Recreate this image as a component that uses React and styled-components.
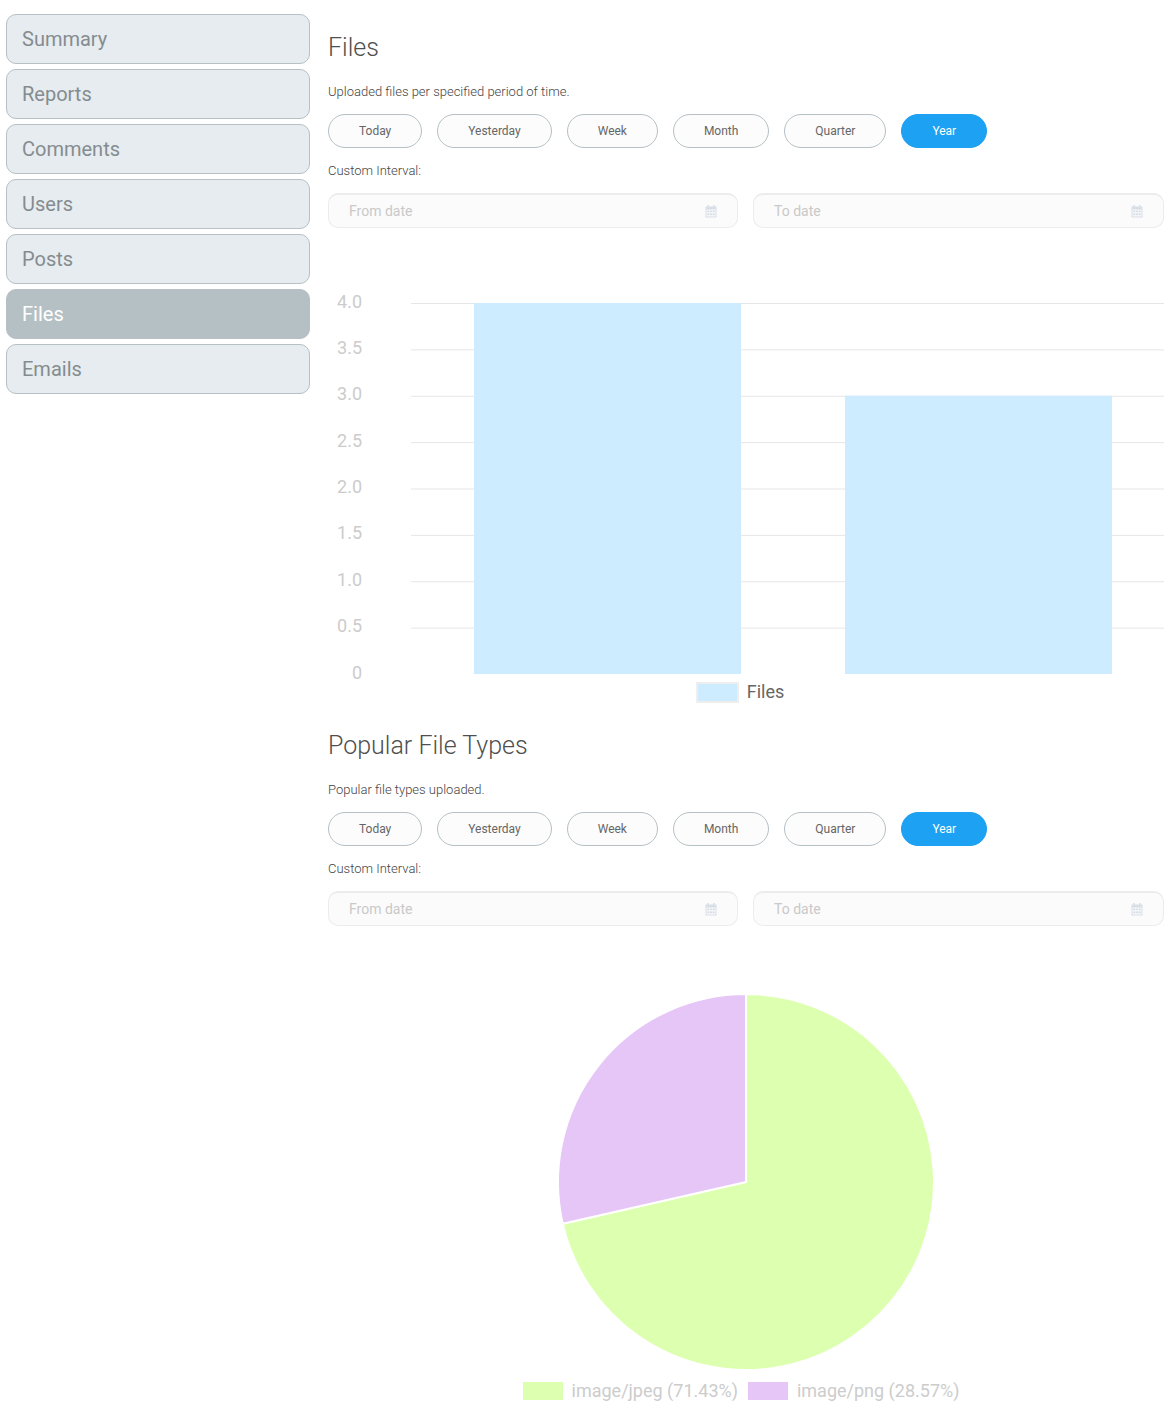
import React from "react";
import styled, { createGlobalStyle } from "styled-components";

const NAV_ITEMS = ["Summary", "Reports", "Comments", "Users", "Posts", "Files", "Emails"];
const PERIODS = ["Today", "Yesterday", "Week", "Month", "Quarter", "Year"];
const TICKS = ["4.0", "3.5", "3.0", "2.5", "2.0", "1.5", "1.0", "0.5", "0"];
const BARS = [
  { x: 146, value: 4 },
  { x: 517, value: 3 },
];
const PIE = [
  { label: "image/jpeg", share: 71.43, color: "#ddffb0" },
  { label: "image/png", share: 28.57, color: "#e5c6f7" },
];

const CalendarIcon = () => (
  <svg width="12" height="14" viewBox="0 0 12 14" aria-hidden="true">
    <path d="M0.5 2.5h11V13.5H0.5z" fill="#d9dfe7" />
    <path d="M2.4 1h1.4v3H2.4zM8.2 1h1.4v3H8.2z" fill="#d9dfe7" />
    <path d="M1.5 5.5h9V12.5H1.5z" fill="#f4f6f8" />
    <path
      d="M2.6 6.8h1.5v1.3H2.6zM5.25 6.8h1.5v1.3H5.25zM7.9 6.8h1.5v1.3H7.9zM2.6 9.6h1.5v1.3H2.6zM5.25 9.6h1.5v1.3H5.25zM7.9 9.6h1.5v1.3H7.9z"
      fill="#ced5de"
    />
  </svg>
);

const BarChart = () => {
  const top = 23;
  const step = 46.375;
  const bottom = top + step * 8;
  return (
    <ChartSvg width="836" height="403" viewBox="0 0 836 403">
      {TICKS.map((tick, i) => (
        <g key={tick}>
          {i < 8 && (
            <line
              x1="83"
              x2="836"
              y1={top + 0.5 + step * i}
              y2={top + 0.5 + step * i}
              stroke="#e6e6e6"
              strokeWidth="1"
            />
          )}
          <TickLabel x="34" y={top + 5 + Math.floor(step * i)}>
            {tick}
          </TickLabel>
        </g>
      ))}
      {BARS.map((bar) => {
        const height = bar.value * 2 * step;
        return (
          <rect key={bar.x} x={bar.x} y={bottom - height} width="267" height={height} fill="#cdecff" />
        );
      })}
    </ChartSvg>
  );
};

const PieChart = () => {
  const cx = 418;
  const cy = 190;
  const r = 188;
  let angle = 0;
  const slices = PIE.map((slice) => {
    const start = angle;
    angle += (slice.share / 100) * Math.PI * 2;
    const large = angle - start > Math.PI ? 1 : 0;
    const x1 = cx + r * Math.sin(start);
    const y1 = cy - r * Math.cos(start);
    const x2 = cx + r * Math.sin(angle);
    const y2 = cy - r * Math.cos(angle);
    return { ...slice, d: `M${cx} ${cy}L${x1} ${y1}A${r} ${r} 0 ${large} 1 ${x2} ${y2}Z` };
  });
  return (
    <ChartSvg width="836" height="380" viewBox="0 0 836 380">
      {slices.map((slice) => (
        <path key={slice.label} d={slice.d} fill={slice.color} stroke="#fff" strokeWidth="2" />
      ))}
    </ChartSvg>
  );
};

const Filters = () => (
  <>
    <PeriodRow>
      {PERIODS.map((period) => (
        <PeriodButton key={period} $active={period === "Year"}>
          {period}
        </PeriodButton>
      ))}
    </PeriodRow>
    <IntervalLabel>Custom Interval:</IntervalLabel>
    <DateRow>
      <DateField>
        <span>From date</span>
        <CalendarIcon />
      </DateField>
      <DateField>
        <span>To date</span>
        <CalendarIcon />
      </DateField>
    </DateRow>
  </>
);

const App = () => {
  return (
    <Page>
      <GlobalStyle />
      <Sidebar>
        {NAV_ITEMS.map((item) => (
          <NavItem key={item} $active={item === "Files"}>
            {item}
          </NavItem>
        ))}
      </Sidebar>
      <Main>
        <Section>
          <Title>Files</Title>
          <Subtitle>Uploaded files per specified period of time.</Subtitle>
          <Filters />
          <BarArea>
            <BarChart />
            <BarLegend>
              <BarSwatch />
              <span>Files</span>
            </BarLegend>
          </BarArea>
        </Section>
        <Section>
          <Title>Popular File Types</Title>
          <Subtitle>Popular file types uploaded.</Subtitle>
          <Filters />
          <PieArea>
            <PieChart />
            <PieLegend>
              {PIE.map((slice) => (
                <PieLegendItem key={slice.label}>
                  <PieSwatch $color={slice.color} />
                  <span>
                    {slice.label} ({slice.share}%)
                  </span>
                </PieLegendItem>
              ))}
            </PieLegend>
          </PieArea>
        </Section>
      </Main>
    </Page>
  );
};

export default App;

const GlobalStyle = createGlobalStyle`
  body {
    margin: 0;
    background: #fff;
    font-family: Roboto, "Liberation Sans", sans-serif;
  }
`;

const Page = styled.div`
  display: flex;
  align-items: flex-start;
  gap: 18px;
  padding: 14px 9px 0 6px;
  height: 1414px;
  overflow: hidden;
`;

const Sidebar = styled.nav`
  display: flex;
  flex-direction: column;
  gap: 5px;
  flex: 0 0 304px;
`;

const NavItem = styled.div`
  box-sizing: border-box;
  height: 50px;
  display: flex;
  align-items: center;
  padding-left: 15px;
  border: 1px solid #b6c0c5;
  border-radius: 10px;
  font-size: 20px;
  color: ${(p) => (p.$active ? "#fff" : "#858c90")};
  background: ${(p) => (p.$active ? "#b5c0c4" : "#e6ecef")};
`;

const Main = styled.main`
  flex: 1;
  min-width: 0;
  display: flex;
  flex-direction: column;
`;

const Section = styled.section`
  display: flex;
  flex-direction: column;
`;

const Title = styled.h2`
  margin: 18px 0 0;
  height: 32px;
  line-height: 32px;
  font-size: 25px;
  font-weight: 300;
  color: #4f4f4f;
`;

const Subtitle = styled.p`
  margin: 18px 0 0;
  height: 20px;
  line-height: 20px;
  font-size: 13px;
  font-weight: 300;
  color: #444;
`;

const PeriodRow = styled.div`
  display: flex;
  gap: 15px;
  margin-top: 12px;
`;

const PeriodButton = styled.button`
  box-sizing: border-box;
  height: 34px;
  padding: 0 29.98px;
  border: 1px solid ${(p) => (p.$active ? "#1da1f2" : "#b6c0c5")};
  border-radius: 17px;
  background: ${(p) => (p.$active ? "#1da1f2" : "#fcfcfc")};
  color: ${(p) => (p.$active ? "#fff" : "#666")};
  font-family: inherit;
  font-size: 12px;
`;

const IntervalLabel = styled.div`
  margin-top: 13px;
  height: 20px;
  line-height: 20px;
  font-size: 13px;
  font-weight: 300;
  color: #444;
`;

const DateRow = styled.div`
  display: grid;
  grid-template-columns: 410px 411px;
  gap: 15px;
  margin-top: 12px;
`;

const DateField = styled.div`
  box-sizing: border-box;
  height: 35px;
  display: flex;
  align-items: center;
  justify-content: space-between;
  padding: 0 20px;
  border: 1px solid #ececec;
  border-top-width: 2px;
  border-radius: 10px;
  background: #fbfbfb;
  font-size: 14px;
  color: #c9c9c9;
`;

const BarArea = styled.div`
  margin: 52px 0 9px;
`;

const ChartSvg = styled.svg`
  display: block;
`;

const TickLabel = styled.text`
  font-family: Roboto, "Liberation Sans", sans-serif;
  font-size: 18px;
  font-weight: 400;
  fill: #ccc;
  text-anchor: end;
`;

const BarLegend = styled.div`
  display: flex;
  justify-content: center;
  align-items: flex-start;
  gap: 8px;
  padding-right: 12px;
  margin-top: -1px;
  height: 21px;
  line-height: 20px;
  font-size: 18px;
  color: #666;
`;

const BarSwatch = styled.i`
  box-sizing: border-box;
  width: 43px;
  height: 21px;
  background: #cdecff;
  border: 2px solid #eee;
`;

const PieArea = styled.div`
  margin-top: 66px;
`;

const PieLegend = styled.div`
  display: flex;
  justify-content: center;
  gap: 10px;
  padding-right: 10px;
  margin-top: 8px;
`;

const PieLegendItem = styled.div`
  display: flex;
  align-items: center;
  gap: 9px;
  font-size: 18px;
  color: #ccc;
`;

const PieSwatch = styled.i`
  width: 40px;
  height: 18px;
  background: ${(p) => p.$color};
`;
